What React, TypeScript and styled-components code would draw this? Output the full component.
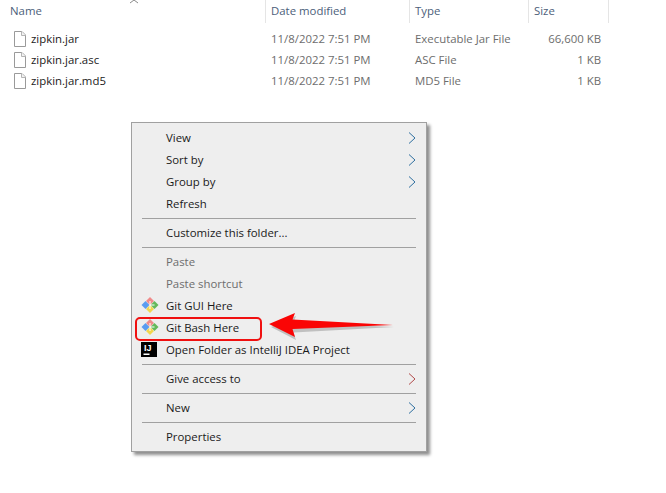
import React from 'react';
import styled, { createGlobalStyle } from 'styled-components';

const GlobalStyle = createGlobalStyle`
  html, body {
    margin: 0;
    padding: 0;
    background: #fff;
    overflow: hidden;
  }
  body {
    font-family: "Open Sans", "Liberation Sans", sans-serif;
    font-size: 11.4px;
  }
`;

const Page = styled.div`
  position: relative;
  width: 666px;
  height: 493px;
  overflow: hidden;
`;

const columns = '266px 144px 119px 80px';

const Header = styled.div`
  display: grid;
  grid-template-columns: ${columns};
  height: 23px;
  color: #4c607a;
  position: relative;
`;

const HeaderCell = styled.div`
  display: flex;
  align-items: center;
  padding-left: 5px;
  padding-bottom: 2px;
  box-sizing: border-box;
  border-right: 1px solid #e5e5e5;
  height: 23px;
  &:first-child {
    padding-left: 10px;
  }
`;

const SortMark = styled.svg`
  position: absolute;
  left: 130px;
  top: 0;
`;

const Rows = styled.div`
  display: flex;
  flex-direction: column;
  padding-top: 5px;
`;

const Row = styled.div`
  display: grid;
  grid-template-columns: ${columns};
  height: 21px;
  align-items: center;
  color: #6d6d6d;
`;

const NameCell = styled.div`
  display: flex;
  align-items: center;
  gap: 5px;
  padding-left: 14px;
  color: #1a1a1a;
`;

const TextCell = styled.div`
  padding-left: 5px;
`;

const SizeCell = styled.div`
  text-align: right;
  padding-right: 8px;
`;

const Menu = styled.div`
  position: absolute;
  left: 131px;
  top: 122px;
  width: 294px;
  padding: 3px 0 4px;
  background: #eeeeee;
  border: 1px solid #a0a0a0;
  box-shadow: 3px 3px 3px #8f8f8f;
  color: #1a1a1a;
`;

const Item = styled.div<{ $disabled?: boolean }>`
  display: flex;
  align-items: center;
  height: 22px;
  position: relative;
  padding-left: 34px;
  color: ${(p) => (p.$disabled ? '#6d6d6d' : '#1a1a1a')};
`;

const ItemIcon = styled.span`
  position: absolute;
  left: 9px;
  top: 2px;
  width: 18px;
  height: 18px;
  display: flex;
  align-items: center;
`;

const Chevron = styled.svg`
  position: absolute;
  right: 10px;
  top: 6px;
`;

const Separator = styled.div`
  height: 1px;
  margin: 4px 10px 2px;
  background: #a0a0a0;
`;

const Callout = styled.div`
  position: absolute;
  left: 135px;
  top: 317px;
  width: 123px;
  height: 20px;
  border: 2px solid #f01010;
  border-radius: 5px;
`;

const Arrow = styled.svg`
  position: absolute;
  left: 268px;
  top: 310px;
`;

const FileIcon = () => (
  <svg width="12" height="16" viewBox="0 0 12 16">
    <path d="M.5.5h7.5l3.5 3.5v11.500H.5z" fill="#fff" stroke="#9a9a9a" />
    <path d="M7.500.5v4h4" fill="#f2f2f2" stroke="#b5b5b5" />
  </svg>
);

const GitIcon = () => (
  <svg width="18" height="16" viewBox="0 0 18 16">
    <path d="M9 0 13 4 9 8 5 4z" fill="#f08a8a" />
    <path d="M13.500 4 17.500 8 13.500 12 9.500 8z" fill="#63b95a" />
    <path d="M9 8 13 12 9 16 5 12z" fill="#f2d64e" />
    <path d="M4.500 4 8.500 8 4.500 12 .5 8z" fill="#5a9cf0" />
    <path d="M9 4v8M9 8h4.500" stroke="#fff" strokeWidth="1" />
  </svg>
);

const IdeaIcon = () => (
  <svg width="16" height="15" viewBox="0 0 16 15">
    <rect width="16" height="15" fill="#000" />
    <text x="3" y="9" fontFamily="Liberation Sans, sans-serif" fontSize="9" fontWeight="700" fill="#fff">IJ</text>
    <rect x="2.500" y="11.500" width="6" height="1.500" fill="#fff" />
  </svg>
);

const SubmenuChevron = ({ color = '#2f6f9f' }: { color?: string }) => (
  <Chevron width="8" height="12" viewBox="0 0 8 12">
    <path d="M1 .5 7 6l-6 5.500" fill="none" stroke={color} strokeWidth="1" />
  </Chevron>
);

const files = [
  { name: 'zipkin.jar', type: 'Executable Jar File', size: '66,600 KB' },
  { name: 'zipkin.jar.asc', type: 'ASC File', size: '1 KB' },
  { name: 'zipkin.jar.md5', type: 'MD5 File', size: '1 KB' },
];

export default function App() {
  return (
    <Page>
      <GlobalStyle />
      <Header>
        <HeaderCell>Name</HeaderCell>
        <HeaderCell>Date modified</HeaderCell>
        <HeaderCell>Type</HeaderCell>
        <HeaderCell>Size</HeaderCell>
        <SortMark width="8" height="4" viewBox="0 0 8 4">
          <path d="M0 3 4 0l4 3" fill="none" stroke="#8a8a8a" />
        </SortMark>
      </Header>
      <Rows>
        {files.map((f) => (
          <Row key={f.name}>
            <NameCell>
              <FileIcon />
              {f.name}
            </NameCell>
            <TextCell>11/8/2022 7:51 PM</TextCell>
            <TextCell>{f.type}</TextCell>
            <SizeCell>{f.size}</SizeCell>
          </Row>
        ))}
      </Rows>

      <Menu>
        <Item>View<SubmenuChevron /></Item>
        <Item>Sort by<SubmenuChevron /></Item>
        <Item>Group by<SubmenuChevron /></Item>
        <Item>Refresh</Item>
        <Separator />
        <Item>Customize this folder...</Item>
        <Separator />
        <Item $disabled>Paste</Item>
        <Item $disabled>Paste shortcut</Item>
        <Item><ItemIcon><GitIcon /></ItemIcon>Git GUI Here</Item>
        <Item><ItemIcon><GitIcon /></ItemIcon>Git Bash Here</Item>
        <Item><ItemIcon><IdeaIcon /></ItemIcon>Open Folder as IntelliJ IDEA Project</Item>
        <Separator />
        <Item>Give access to<SubmenuChevron color="#b04a4a" /></Item>
        <Separator />
        <Item>New<SubmenuChevron /></Item>
        <Separator />
        <Item>Properties</Item>
      </Menu>

      <Callout />
      <Arrow width="130" height="32" viewBox="0 0 130 32">
        <path d="M2 15 27 4 24.500 10.500 125 15 24.500 20.500 27 28z" fill="#555" opacity=".3" transform="translate(1 2)" />
        <path d="M1 14 27 3 24.500 9.500 125 15 24.500 19 27 27z" fill="#fa0505" />
      </Arrow>
    </Page>
  );
}
